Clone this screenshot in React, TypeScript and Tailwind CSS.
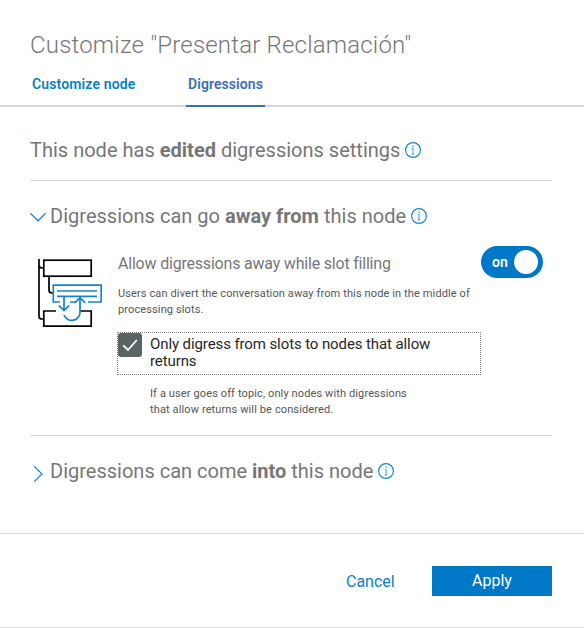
import type { ReactNode } from "react";

function InfoIcon() {
  return (
    <svg width="16" height="16" viewBox="0 0 16 16" fill="none" stroke="#1683d0" className="shrink-0">
      <circle cx="8" cy="8" r="7.4" strokeWidth="1.15" />
      <path d="M7 6.5H8V12M6.7 12H9.3" strokeWidth="0.8" />
      <circle cx="8" cy="4.2" r="0.75" fill="#1683d0" stroke="none" />
    </svg>
  );
}

function Chevron({ open }: { open?: boolean }) {
  return (
    <svg width="16" height="16" viewBox="0 0 16 16" fill="none" stroke="#1683d0" strokeWidth="1.2" className="shrink-0">
      <path d={open ? "M0.3 4.2L8 11.8L15.7 4.2" : "M4.2 0.3L12 8L4.2 15.7"} />
    </svg>
  );
}

function SlotDiagram() {
  return (
    <svg width="66" height="70" viewBox="0 0 66 70" fill="none" className="shrink-0">
      <g stroke="#000" strokeWidth="1.7">
        <path d="M1 1V58.5Q1 61 4 61H5M1 7Q1 10 4 10H5M11 19V32Q11 35 14 35H15" />
        <path d="M18 53H5.8V68.2H53.2V53H42" />
        <rect x="5.8" y="2.2" width="47.4" height="16" />
      </g>
      <g stroke="#1683d0" strokeWidth="1.7">
        <path d="M22 44H15.3V27.2H63.2V44H50M32 44H37" />
        <path d="M19 33H59M19 38.3H59" />
        <path d="M26 38.5V52.5M20.8 47.4L26 52.6L31.2 47.4" />
        <path d="M42 39.5V53A8.3 8.3 0 0 1 26 57M36.8 44.8L42 39.6L47.2 44.8" />
      </g>
    </svg>
  );
}

function Line({ children, className }: { children: ReactNode; className: string }) {
  return <div className={"whitespace-nowrap " + className}>{children}</div>;
}

export default function App() {
  return (
    <div className="flex h-[628px] w-[584px] flex-col overflow-hidden border-b border-[#e5e5e5] bg-white font-[Roboto,sans-serif] text-[#777677]">
      <header className="flex h-[107px] shrink-0 flex-col border-b-2 border-[#d8d8d8]">
        <h1 className="ml-[30px] mt-[29px] h-[33px] whitespace-nowrap text-[24px] font-light leading-8 tracking-[0.19px]">Customize "Presentar Reclamación"</h1>
        <nav className="-mb-0.5 flex h-[45px] text-[14px] font-semibold">
          <div className="ml-[32px] w-[154px] pt-[12px] leading-5 tracking-[0.13px] text-[#087fcc]">Customize node</div>
          <div className="w-[79px] border-b-2 border-[#3b6fba] pl-0.5 pt-[12px] leading-5 tracking-[0.08px] text-[#3b6fba]">Digressions</div>
        </nav>
      </header>
      <main className="ml-[30px] flex w-[522px] flex-1 flex-col text-[20px]">
        <div className="flex h-[74px] shrink-0 items-center gap-[5px] border-b border-[#d8d8d8] pt-[13px]">
          <Line className="w-[370px] leading-6 tracking-[0.01px]">This node has <b>edited</b> digressions settings</Line>
          <InfoIcon />
        </div>
        <section className="h-[255px] shrink-0 border-b border-[#d8d8d8]">
          <div className="flex h-[70px] items-center gap-1">
            <div className="pt-[2px]"><Chevron open /></div>
            <Line className="w-[357px] leading-6 tracking-[0.02px]">Digressions can go <b>away from</b> this node</Line>
            <InfoIcon />
          </div>
          <div className="flex pl-2">
            <div className="w-20 pt-[7px]"><SlotDiagram /></div>
            <div className="w-[363px]">
              <Line className="pt-[1px] text-[16px] leading-6 tracking-[-0.2px]">Allow digressions away while slot filling</Line>
              <div className="mt-[10px] whitespace-nowrap text-[11px] leading-4 tracking-[0.12px] text-[#555]">Users can divert the conversation away from this node in the middle of<br />processing slots.</div>
              <div className="-ml-px mt-[14px] flex h-[43px] w-[364px] border border-dotted border-[#777]">
                <svg width="24" height="24" viewBox="0 0 24 24" fill="none" className="shrink-0">
                  <rect width="24" height="24" rx="3" fill="#5a6464" />
                  <path d="M5.2 12.3L10 17L18.8 7" stroke="#fff" strokeWidth="1.8" />
                </svg>
                <div className="ml-2 whitespace-nowrap pt-[3px] text-[15px] leading-[17px] tracking-[-0.1px] text-[#272727]">Only digress from slots to nodes that allow<br />returns</div>
              </div>
              <div className="ml-8 mt-[11px] whitespace-nowrap text-[11px] leading-4 tracking-[0.12px] text-[#555]">If a user goes off topic, only nodes with digressions<br />that allow returns will be considered.</div>
            </div>
            <div className="-mt-[5px] flex h-8 w-[62px] shrink-0 items-center justify-between rounded-full bg-[#0078c8] pl-[11px] pr-[5px] text-[14px] font-semibold text-white">
              on<span className="size-6 rounded-full bg-white" />
            </div>
          </div>
        </section>
        <div className="flex h-[70px] items-center gap-1">
          <div className="pt-[5px]"><Chevron /></div>
          <Line className="w-[324px] leading-6">Digressions can come <b>into</b> this node</Line>
          <InfoIcon />
        </div>
      </main>
      <footer className="flex h-[94px] shrink-0 border-t border-[#d8d8d8] pl-[346px] pt-8 text-[16px]">
        <div className="w-[86px] pt-px leading-[30px] text-[#087fcc]">Cancel</div>
        <div className="h-[30px] w-[120px] bg-[#0078c8] text-center leading-[30px] text-white">Apply</div>
      </footer>
    </div>
  );
}
